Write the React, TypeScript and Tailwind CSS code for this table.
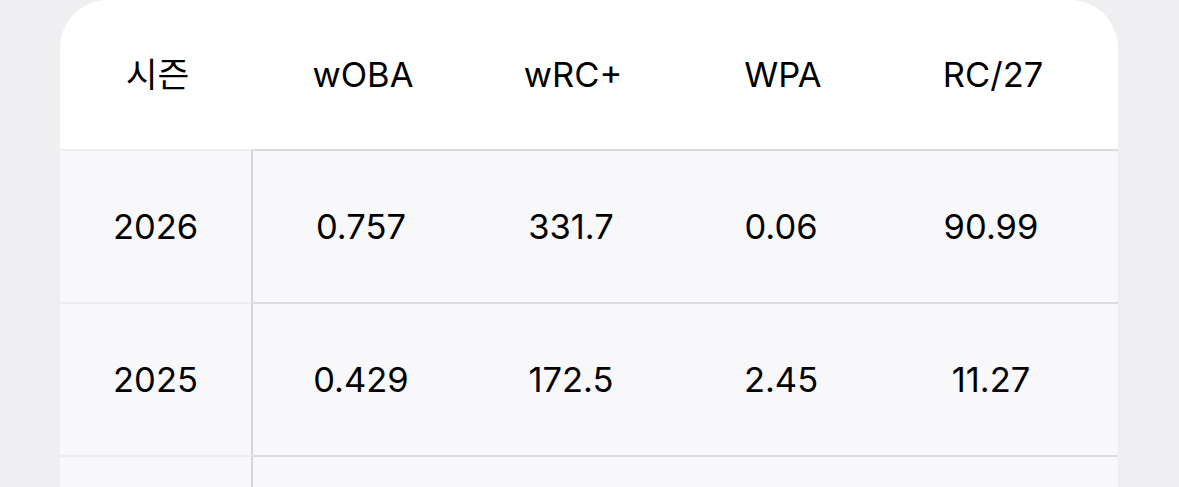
import React from "react";

const headers = ["wOBA", "wRC+", "WPA", "RC/27"];

const rows = [
  { season: "2026", values: ["0.757", "331.7", "0.06", "90.99"] },
  { season: "2025", values: ["0.429", "172.5", "2.45", "11.27"] },
  { season: "", values: ["", "", "", ""] },
];

function Row(props: { season: string; values: string[] }) {
  return (
    <div className="flex h-[153px] shrink-0 bg-[#f8f8fa]">
      <div className="flex w-[193px] shrink-0 items-center justify-center border-t-2 border-r-2 border-t-[#ededf0] border-r-[#d6d6da]">
        {props.season}
      </div>
      <div className="flex flex-1 border-t-2 border-[#dcdce0] pl-[3px]">
        {props.values.map((v, i) => (
          <div key={i} className="flex w-[210px] items-center justify-center">
            {v}
          </div>
        ))}
      </div>
    </div>
  );
}

export default function App() {
  return (
    <div
      className="h-[487px] w-[1179px] overflow-hidden bg-[#efeff2] pl-[60px] pr-[61px] text-[34.5px] text-black"
      style={{ fontFamily: "Inter, 'Noto Sans CJK KR', sans-serif" }}
    >
      <div className="flex flex-col overflow-hidden rounded-t-[48px] bg-white">
        <div className="flex h-[149px] shrink-0">
          <div className="flex w-[195px] items-center justify-center">시즌</div>
          <div className="flex pl-[3px]">
            {headers.map((h) => (
              <div key={h} className="flex w-[210px] items-center justify-center">
                {h}
              </div>
            ))}
          </div>
        </div>
        {rows.map((r, i) => (
          <Row key={i} season={r.season} values={r.values} />
        ))}
      </div>
    </div>
  );
}
